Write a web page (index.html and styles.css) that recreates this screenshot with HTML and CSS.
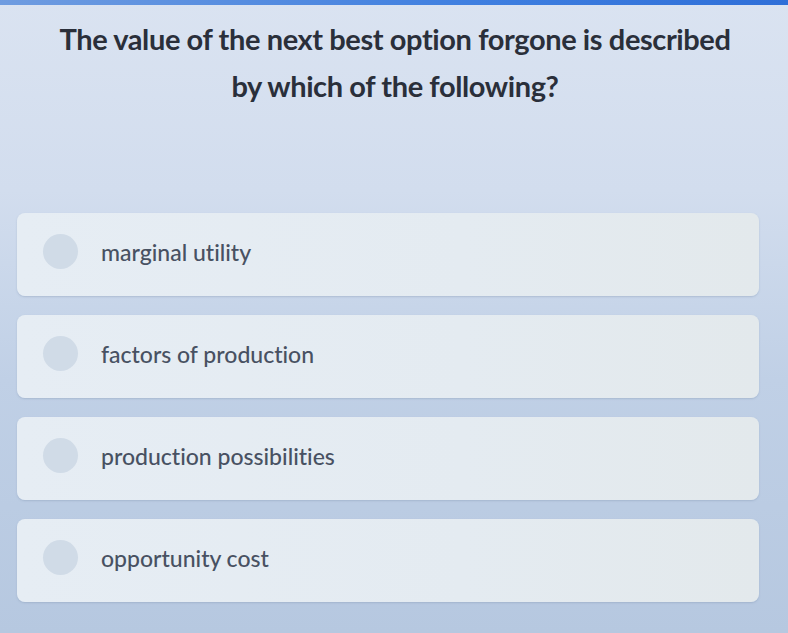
FILE: index.html
```html
<!DOCTYPE html>
<html>
<head>
<meta charset="utf-8">
<link rel="stylesheet" href="styles.css">
</head>
<body>
<div class="topbar"></div>
<main class="quiz">
  <h1 class="question">The value of the next best option forgone is described<br>by which of the following?</h1>
  <div class="options">
    <label class="option"><span class="radio"></span><span class="label">marginal utility</span></label>
    <label class="option"><span class="radio"></span><span class="label">factors of production</span></label>
    <label class="option"><span class="radio"></span><span class="label">production possibilities</span></label>
    <label class="option"><span class="radio"></span><span class="label">opportunity cost</span></label>
  </div>
</main>
</body>
</html>
```
FILE: styles.css
```css
html, body {
  margin: 0;
  padding: 0;
}
body {
  width: 788px;
  height: 633px;
  overflow: hidden;
  font-family: Lato, "Open Sans", sans-serif;
  font-variant-ligatures: none;
  background: linear-gradient(180deg, #dae3f1 0%, #d2ddee 30%, #c0d0e6 60%, #b6c8e0 100%);
}
.topbar {
  height: 5px;
  background: linear-gradient(90deg, #6f9ce0 0%, #3f7fe0 60%, #2f6fd8 100%);
}
.quiz {
  padding: 10px 0 0 0;
}
.question {
  margin: 0;
  text-align: center;
  font-size: 29px;
  font-weight: 700;
  line-height: 47px;
  color: #2a2f3a;
  letter-spacing: -0.4px;
  padding-left: 2px;
}
.options {
  display: flex;
  flex-direction: column;
  gap: 19px;
  margin-top: 104px;
  padding-left: 17px;
}
.option {
  display: flex;
  align-items: center;
  width: 742px;
  height: 83px;
  box-sizing: border-box;
  padding-left: 26px;
  padding-bottom: 6px;
  border-radius: 8px;
  background: linear-gradient(90deg, #e6edf4 0%, #e4ebf1 60%, #e3e9ec 100%);
  box-shadow: 0 1px 2px rgba(120, 140, 170, 0.35);
}
.radio {
  width: 35px;
  height: 35px;
  border-radius: 50%;
  background: #d0dbe7;
  flex: none;
}
.label {
  margin-left: 23px;
  font-size: 23px;
  font-weight: 500;
  color: #485162;
}
```
